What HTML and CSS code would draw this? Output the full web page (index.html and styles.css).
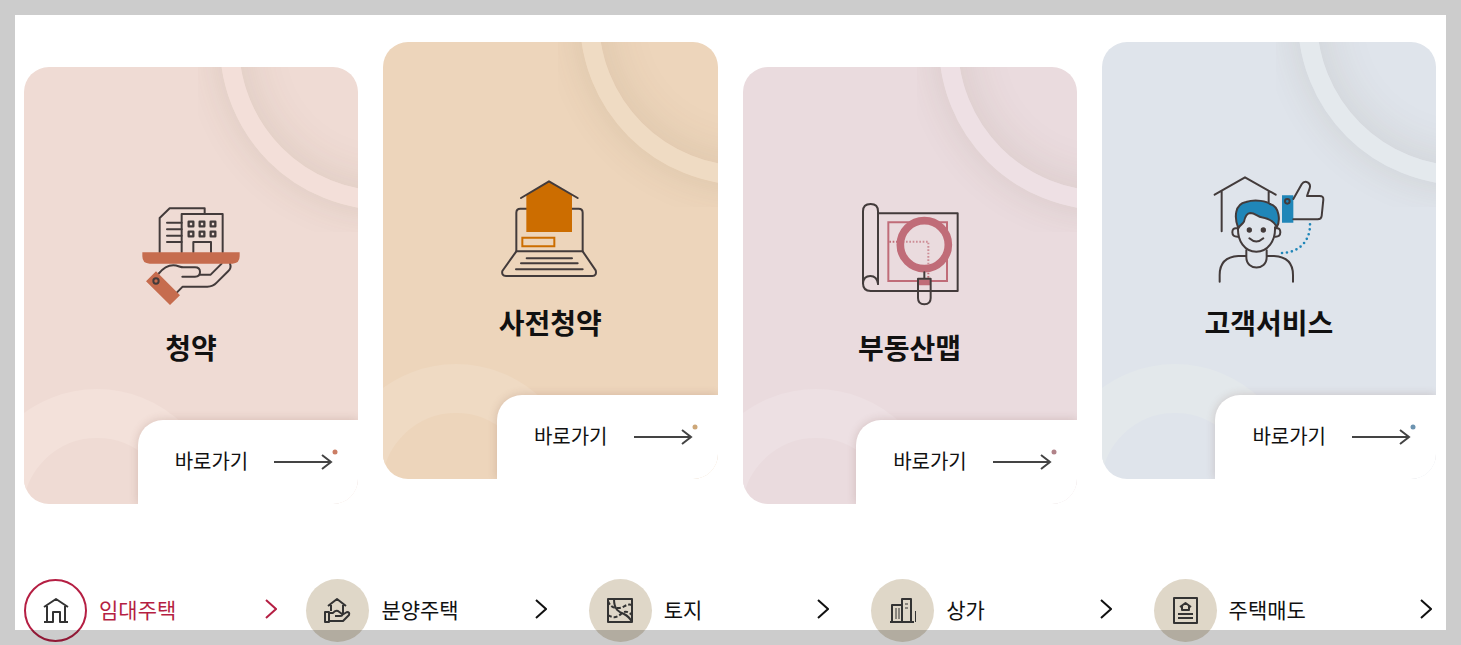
FILE: index.html
```html
<!DOCTYPE html>
<html lang="ko">
<head>
<meta charset="utf-8">
<meta name="viewport" content="width=device-width, initial-scale=1">
<title>청약 서비스</title>
<link rel="stylesheet" href="styles.css">
</head>
<body>
<main class="page">
  <section class="cards">
    <a class="card card--apply" href="#">
      <span class="glow"></span>
      <svg class="card-icon" viewBox="48 27 330 330" aria-hidden="true">
        <g class="ink">
          <path d="M119 187V84L149 55H254V72M185 187V72H308V187M220 187V156H273V187"/>
          <path d="M141 98H185M141 118H185M141 137H185M141 156H185"/>
          <path class="window" d="M206 95h14v14h-14zM239 95h14v14h-14zM272 95h14v14h-14zM206 125h14v14h-14zM239 125h14v14h-14zM272 125h14v14h-14z"/>
          <path d="M115 252C128 236 141 226 160 226C174 226 180 232 190 232H225Q240 232 240 246Q240 260 225 260H187M240 254H272L305 221M330 221Q335 234 325 243L290 278Q279 290 262 290H188L171 307"/>
        </g>
        <path class="tint" d="M67 187H359V199Q359 221 337 221H89Q67 221 67 199zM108 244L180 316L150 345L78 274z"/>
        <circle class="ink" cx="108" cy="273" r="8"/>
      </svg>
      <h2 class="card-title">청약</h2>
      <span class="go">바로가기
        <svg class="arrow" viewBox="0 1 64 22" aria-hidden="true"><path d="M0 13H57M48 6L57 13L48 20"/><circle cx="61" cy="3" r="2.5"/></svg>
      </span>
    </a>
    <a class="card card--early" href="#">
      <span class="glow"></span>
      <svg class="card-icon" viewBox="46 27 330 330" aria-hidden="true">
        <g class="ink">
          <path d="M110 259V143Q110 131 122 131H297Q309 131 309 143V259"/>
          <path d="M110 259H309L348 316Q352 333 338 333H79Q65 332 68 318zM141 280H277M124 295H294M109 313H309"/>
        </g>
        <path class="tint" d="M140 90L208 50L277 90V201H140z"/>
        <path class="tint-line" d="M128 218H224V244H128z"/>
        <path class="ink" d="M124 99L208 49L294 99"/>
      </svg>
      <h2 class="card-title">사전청약</h2>
      <span class="go">바로가기
        <svg class="arrow" viewBox="0 1 64 22" aria-hidden="true"><path d="M0 13H57M48 6L57 13L48 20"/><circle cx="61" cy="3" r="2.5"/></svg>
      </span>
    </a>
    <a class="card card--map" href="#">
      <span class="glow"></span>
      <svg class="card-icon" viewBox="45 27 330 330" aria-hidden="true">
        <path class="tint-line" d="M145 97H321V273H145z"/>
        <path class="tint-line dots" d="M148 155H265V268"/>
        <circle class="lens" cx="253" cy="164" r="72"/>
        <path class="tint" d="M236 268H270V286H236z"/>
        <g class="ink">
          <path d="M114 282V64Q114 42 92 42Q69 42 69 64V280Q69 303 92 303H353V70H115"/>
          <path d="M69 280Q71 258 91 258Q111 258 114 282"/>
          <path d="M253 247V266M234 266H272V324Q272 343 253 343Q234 343 234 324z"/>
        </g>
      </svg>
      <h2 class="card-title">부동산맵</h2>
      <span class="go">바로가기
        <svg class="arrow" viewBox="0 1 64 22" aria-hidden="true"><path d="M0 13H57M48 6L57 13L48 20"/><circle cx="61" cy="3" r="2.5"/></svg>
      </span>
    </a>
    <a class="card card--help" href="#">
      <span class="glow"></span>
      <svg class="card-icon" viewBox="72 27 330 330" aria-hidden="true">
        <path class="ink" d="M74 89L165 37L257 89M95 78V199M236 78V112"/>
        <path class="tint" d="M145 190C132 158 134 117 168 111C198 101 232 110 240 117C270 125 271 170 260 187C253 166 231 160 215 157C203 154 194 144 181 144C167 145 164 160 162 170C158 178 150 179 145 190z"/>
        <path class="tint" d="M276 91H310V173H276z"/>
        <g class="ink">
          <path d="M145 190C132 158 134 117 168 111C198 101 232 110 240 117C270 125 271 170 260 187C253 166 231 160 215 157C203 154 194 144 181 144C167 145 164 160 162 170C158 178 150 179 145 190z"/>
          <path d="M144 187C142 228 164 260 199 260C233 260 257 228 255 187"/>
          <path d="M140 190Q127 188 127 202Q127 216 144 215M259 190Q271 188 271 202Q271 216 255 215"/>
          <path d="M178 220Q199 239 220 220"/>
          <path d="M169 256V277C169 318 230 318 230 277V256M169 273H145Q89 276 89 330V350M230 273H252Q309 276 309 330V350"/>
          <path d="M310 102L335 58Q342 47 353 52Q363 58 359 70L351 93H389Q401 93 400 104L395 153Q394 163 383 163H310"/>
          <circle class="solid" cx="178" cy="195" r="5"/>
          <circle class="solid" cx="220" cy="195" r="5"/>
          <circle cx="292" cy="109" r="7"/>
        </g>
        <path class="tint-line dots-round" d="M360 178C361 224 331 265 270 264"/>
      </svg>
      <h2 class="card-title">고객서비스</h2>
      <span class="go">바로가기
        <svg class="arrow" viewBox="0 1 64 22" aria-hidden="true"><path d="M0 13H57M48 6L57 13L48 20"/><circle cx="61" cy="3" r="2.5"/></svg>
      </span>
    </a>
  </section>

  <nav aria-label="공급 유형">
    <ul class="types">
      <li class="type type--first">
        <a class="type-link type-link--active" href="#">
          <span class="badge"><svg viewBox="0 0 28 28" aria-hidden="true"><path d="M2 10L14 2L26 10M5 9V25H2M23 9V25H26M4 25H11V15H18V25H24"/></svg></span>
          <span class="type-name">임대주택</span>
          <svg class="chevron" viewBox="0 0 12 20" aria-hidden="true"><path d="M1 1L11 10L1 19"/></svg>
        </a>
      </li>
      <li class="type">
        <a class="type-link" href="#">
          <span class="badge"><svg viewBox="0 0 28 28" aria-hidden="true"><path d="M4 9L13 2L22 9M7 8V14M19 8V17M1 15H5V25H1zM5 16H9Q11 13 14 14L18 17Q19 19 16 19H11M18 18L23 15Q26 15 25 18L19 24H5"/></svg></span>
          <span class="type-name">분양주택</span>
          <svg class="chevron" viewBox="0 0 12 20" aria-hidden="true"><path d="M1 1L11 10L1 19"/></svg>
        </a>
      </li>
      <li class="type">
        <a class="type-link" href="#">
          <span class="badge"><svg viewBox="0 1 28 28" aria-hidden="true"><path d="M2 3H26V26H2zM8 3C8 14 13 16 18 18C22 20 24 22 26 26"/><path class="trail" d="M2 5C4 10 7 12 11 12C17 13 20 7 26 9M2 19C8 23 12 21 16 17C19 15 22 15 26 19"/></svg></span>
          <span class="type-name">토지</span>
          <svg class="chevron" viewBox="0 0 12 20" aria-hidden="true"><path d="M1 1L11 10L1 19"/></svg>
        </a>
      </li>
      <li class="type">
        <a class="type-link" href="#">
          <span class="badge"><svg viewBox="1 1 28 28" aria-hidden="true"><path d="M2 26H26M4 26V9H13M14 26V3H23V26"/><path class="thin" d="M8 12V23M11 12V23M17 8H20M17 12H20M27.500 15V26"/></svg></span>
          <span class="type-name">상가</span>
          <svg class="chevron" viewBox="0 0 12 20" aria-hidden="true"><path d="M1 1L11 10L1 19"/></svg>
        </a>
      </li>
      <li class="type type--last">
        <a class="type-link" href="#">
          <span class="badge"><svg viewBox="2 1 28 28" aria-hidden="true"><path d="M5 2H28V27H5zM11 11L16.500 7L22 11M13 10V14H20V10M9 18H24M9 22H24"/></svg></span>
          <span class="type-name">주택매도</span>
          <svg class="chevron" viewBox="0 0 12 20" aria-hidden="true"><path d="M1 1L11 10L1 19"/></svg>
        </a>
      </li>
    </ul>
  </nav>
</main>
</body>
</html>
```
FILE: styles.css
```css
*,
*::before,
*::after {
  box-sizing: border-box;
}

body {
  margin: 0;
  background: #fff;
  color: #111;
  font-family: "Noto Sans CJK KR", "Noto Sans", sans-serif;
}

/* Translucent frame round the window */
body::after {
  content: "";
  position: fixed;
  inset: 0;
  border: 15px solid rgba(0, 0, 0, 0.2);
  pointer-events: none;
}

a {
  color: inherit;
  text-decoration: none;
}

.page {
  padding: 42px 25px 0 24px;
}

.cards {
  display: grid;
  grid-template-columns: repeat(4, 1fr);
  align-items: start;
  gap: 25px;
}

.card {
  position: relative;
  display: flex;
  flex-direction: column;
  align-items: center;
  padding-top: 132px;
  border-radius: 25px;
  overflow: hidden;
  background: var(--bg);
}

.card:nth-child(odd) {
  margin-top: 25px;
}

.card--apply {
  --bg: #efdbd4;
  --ring: #f3dfd9;
  --ring-low: #f3e1da;
  --tint: #c66c4e;
  --dot: #cb7d64;
}

.card--early {
  --bg: #edd5bb;
  --ring: #efdbc3;
  --ring-low: #efdac3;
  --tint: #cc6d00;
  --dot: #cda778;
}

.card--map {
  --bg: #eadbde;
  --ring: #eee0e4;
  --ring-low: #ede0e3;
  --tint: #c06c78;
  --dot: #b18389;
}

.card--help {
  --bg: #dfe4eb;
  --ring: #e4e9ed;
  --ring-low: #e3e8eb;
  --tint: #2086b8;
  --dot: #6c93b0;
}

.glow {
  position: absolute;
  top: 0;
  right: 0;
  width: 160px;
  height: 165px;
  overflow: hidden;
}

.glow::before {
  content: "";
  position: absolute;
  right: -194px;
  bottom: 22px;
  width: 332px;
  height: 332px;
  border: 19px solid var(--ring);
  border-radius: 50%;
  box-shadow: 0 0 40px rgba(90, 70, 40, 0.12), inset 0 0 50px rgba(90, 70, 40, 0.12);
}

.card::before {
  content: "";
  position: absolute;
  left: -50px;
  bottom: -131px;
  width: 246px;
  height: 246px;
  border: 49px solid var(--ring-low);
  border-radius: 50%;
}

.card-icon {
  position: relative;
  width: 110px;
  height: 110px;
  overflow: visible;
}

.card-icon .ink {
  fill: none;
  stroke: #433b3b;
  stroke-width: 6;
  stroke-linecap: round;
  stroke-linejoin: round;
}

.card-icon .window {
  stroke-width: 7;
}

.card-icon .solid {
  fill: #433b3b;
}

.card-icon .tint {
  fill: var(--tint);
}

.card-icon .tint-line {
  fill: none;
  stroke: var(--tint);
  stroke-width: 6;
}

.card-icon .dots {
  stroke-dasharray: 5 5;
}

.card-icon .dots-round {
  stroke-width: 8;
  stroke-linecap: round;
  stroke-dasharray: 0 15;
}

.card-icon .lens {
  fill: var(--bg);
  fill-opacity: 0.3;
  stroke: var(--tint);
  stroke-width: 23;
}

.card-title {
  position: relative;
  margin: 17px 0 0;
  font-size: 28px;
  line-height: 42px;
  font-weight: 700;
}

.go {
  position: relative;
  display: flex;
  align-items: center;
  justify-content: space-between;
  align-self: flex-end;
  width: 66%;
  height: 84px;
  margin-top: 52px;
  padding: 0 20px 2px 37px;
  border-top-left-radius: 25px;
  background: #fff;
  box-shadow: 0 0 10px rgba(110, 60, 50, 0.2);
  font-size: 20px;
  line-height: 30px;
}

.arrow {
  width: 64px;
  height: 22px;
  overflow: visible;
  fill: none;
  stroke: #444;
  stroke-width: 2;
}

.arrow circle {
  fill: var(--dot);
  stroke: none;
}

.types {
  display: grid;
  grid-template-columns: repeat(5, 1fr);
  margin: 75px 0 0;
  padding: 0;
  list-style: none;
}

.type {
  padding-right: 42px;
}

.type--first {
  padding-right: 29px;
}

.type--last {
  padding-right: 4px;
}

.type-link {
  display: flex;
  align-items: center;
  gap: 12px;
  font-size: 21px;
  line-height: 32px;
}

.type-link--active {
  color: #b51f43;
}

.type-name,
.chevron {
  margin-bottom: 4px;
}

.badge {
  display: flex;
  align-items: center;
  justify-content: center;
  flex: none;
  width: 63px;
  height: 63px;
  border-radius: 50%;
  background: #dfd7c8;
}

.type-link--active .badge {
  border: 2px solid #b51f43;
  background: #fff;
}

.badge svg {
  width: 28px;
  height: 28px;
  fill: none;
  stroke: #333;
  stroke-width: 2;
  stroke-linejoin: round;
}

.badge .trail {
  stroke-dasharray: 4 2;
}

.badge .thin {
  stroke-width: 1;
}

.chevron {
  width: 12px;
  height: 20px;
  margin-left: auto;
  fill: none;
  stroke: currentColor;
  stroke-width: 2;
}
```
